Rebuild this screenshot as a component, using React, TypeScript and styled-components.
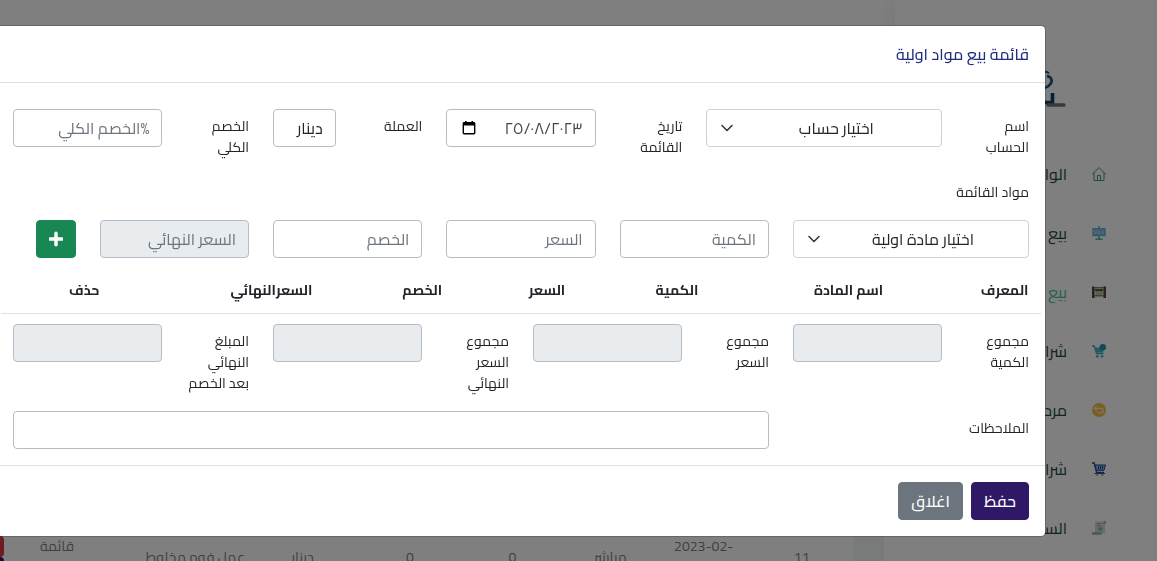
import React from 'react';
import styled, { createGlobalStyle, css } from 'styled-components';

const GlobalStyle = createGlobalStyle`
  *, *::before, *::after { box-sizing: border-box; }
  html, body { margin: 0; height: 100%; overflow: hidden; }
  body, button, input, select, textarea {
    font-family: Cairo, "DejaVu Sans", "Noto Sans", sans-serif;
    font-size: 16px;
    line-height: 24px;
    color: #212529;
  }
`;

/* ---------- page behind the dialog ---------- */

const Page = styled.div`
  display: flex;
  height: 100vh;
  overflow: hidden;
  background: #fff;
`;

const Sidebar = styled.aside`
  flex: none;
  width: 262px;
  padding-inline-start: 51px;
  background: #fff;
  box-shadow: 0 0 20px rgba(1, 41, 112, 0.1);
`;

const Brand = styled.div`
  height: 144px;
  padding-top: 68px;
  padding-inline-start: 40px;
`;

const NavLink = styled.a<{ $active?: boolean }>`
  display: flex;
  align-items: center;
  gap: 25px;
  height: 59px;
  text-decoration: none;
  white-space: nowrap;
  color: ${p => (p.$active ? '#4cc49c' : '#1f4a3c')};

  svg { flex: none; }
`;

const Main = styled.main`
  flex: 1;
  min-width: 0;
  display: flex;
  flex-direction: column;
`;

const TopBar = styled.div`
  flex: none;
  height: 60px;
`;

const Content = styled.div`
  flex: 1;
  display: flex;
  flex-direction: column;
  justify-content: flex-end;
  padding-inline-start: 42px;
  background: linear-gradient(to left, #fff 11px, #f3f6f7 11px, #f3f6f7 42px, #fff 42px);
`;

const Records = styled.table`
  flex: none;
  table-layout: fixed;
  border-collapse: collapse;
  margin-inline-end: -80px;
  margin-bottom: -17px;
  font-size: 14px;
  line-height: 21px;
  text-align: center;

  td { height: 42px; padding: 0 12px; color: #7c8287; }
  td:nth-child(7) { padding: 0; white-space: nowrap; }
  td:nth-last-child(2) { padding-inline-end: 36px; text-align: end; }
  td:last-child { padding: 0; }
`;

const RecordAction = styled.button<{ $color: string }>`
  display: block;
  width: 100%;
  height: 21px;
  border: 0;
  border-radius: 4px;
  background: ${p => p.$color};
`;

/* ---------- dialog ---------- */

const Backdrop = styled.div`
  position: fixed;
  inset: 0;
  display: flex;
  align-items: flex-start;
  padding-top: 25px;
  overflow: hidden;
  background: rgba(0, 0, 0, 0.5);
`;

const Dialog = styled.section`
  flex: 1;
  min-width: 0;
  margin-inline: 111px -4px;
  border: 1px solid rgba(0, 0, 0, 0.2);
  border-radius: 5px;
  background: #fff;
  background-clip: padding-box;
`;

const DialogHeader = styled.header`
  padding: 16px;
  border-bottom: 1px solid #dee2e6;
`;

const DialogTitle = styled.h1`
  margin: 0;
  font-size: 16px;
  font-weight: 500;
  line-height: 24px;
  color: #21307d;
`;

const DialogBody = styled.div`
  padding: 16px 4px;
`;

const FormRow = styled.div`
  display: grid;
  grid-template-columns: repeat(12, minmax(0, 1fr));
  align-items: start;
  margin-top: 10px;
`;

const Cell = styled.div<{ $span: number }>`
  grid-column: span ${p => p.$span};
  padding: 0 12px;
`;

const Label = styled.label`
  display: block;
  padding: 7px 0;
  font-size: 14px;
  line-height: 21px;
`;

const control = css`
  display: block;
  width: 100%;
  height: 38px;
  padding: 6px 12px;
  border: 1px solid #b6bdc9;
  border-radius: 4px;
  background: #fff;
`;

const Input = styled.input`
  ${control}
  &::placeholder { color: #6c757d; opacity: 1; }
  &:disabled { background: #e9ecef; }
`;

const SelectBox = styled.div`
  position: relative;

  svg {
    position: absolute;
    inset-inline-end: 13px;
    top: 11px;
    pointer-events: none;
  }
`;

const Select = styled.select`
  ${control}
  border-color: #ced4da;
  padding-inline-end: 36px;
  appearance: none;
  text-align: center;
  text-align-last: center;
`;

const DateBox = styled.div`
  ${control}
  display: flex;
  align-items: center;
`;

const DateInput = styled.input`
  flex: 1;
  min-width: 0;
  padding: 0;
  border: 0;
  background: none;
  color: #40464c;
`;

const PickerButton = styled.button`
  flex: none;
  display: flex;
  padding: 0;
  border: 0;
  background: none;
`;

const Button = styled.button<{ $color: string }>`
  height: 38px;
  padding: 6px 12px;
  border: 1px solid ${p => p.$color};
  border-radius: 4px;
  background: ${p => p.$color};
  color: #fff;
  font-weight: 500;

  svg { display: block; }
`;

const Items = styled.table`
  width: 100%;
  margin-top: 10px;
  table-layout: fixed;
  border-collapse: separate;
  border-spacing: 0;
  font-size: 14px;
  line-height: 21px;

  th {
    height: 46px;
    padding: 0;
    border-bottom: 1px solid #dee2e6;
    font-weight: 700;
    text-align: center;
    white-space: nowrap;
  }
`;

const DialogFooter = styled.footer`
  display: flex;
  gap: 8px;
  padding: 16px;
  border-top: 1px solid #dee2e6;
`;

/* ---------- drawings ---------- */

const Chevron = () => (
  <svg width="16" height="16" viewBox="0 0 16 16" fill="none" stroke="#343a40" strokeWidth="1.600" strokeLinecap="round" strokeLinejoin="round">
    <path d="m3 5.500 5 5 5-5" />
  </svg>
);

const Calendar = () => (
  <svg width="20" height="16" viewBox="0 0 20 16">
    <path fill="#000" d="M15 2h-1V1h-1.500v1H7.500V1H6v1H5a1.400 1.400 0 0 0-1.400 1.400v9.700A1.400 1.400 0 0 0 5 14.500h10a1.400 1.400 0 0 0 1.400-1.400V3.400A1.400 1.400 0 0 0 15 2zm0 11.100H5V5.500h10z" />
  </svg>
);

const Plus = () => (
  <svg width="14" height="16" viewBox="0 0 14 16" stroke="#fff" strokeWidth="3.500" strokeLinecap="round">
    <path d="M7 2.200v11.600M1.200 8h11.600" />
  </svg>
);

const Logo = () => (
  <svg width="80" height="42" viewBox="0 0 80 42" fill="none">
    <path d="M56 6c2-3 5-3 7-.500" stroke="#245a80" strokeWidth="2" />
    <path d="M52 16c3-1 4-3 4-6M61 8c5 1 6 5 3 8.500-2 2.500-6 4-10 4" stroke="#1d4f75" strokeWidth="2.600" />
    <path d="M30 34.500h36.500V25" stroke="#123f66" strokeWidth="3.600" />
    <path d="M62 37h16" stroke="#6d747b" strokeWidth="3.500" strokeLinecap="round" />
  </svg>
);

const icon = { width: 14, height: 14, viewBox: '0 0 14 14', fill: 'none' };

const HomeIcon = () => (
  <svg {...icon} stroke="#3f9c7c" strokeLinejoin="round" strokeLinecap="round">
    <path d="M.5 7 7 .600 13.500 7M2 5.800v7.700h10V5.800M5.500 13.500v-5h3v5" />
  </svg>
);

const SaleIcon = () => (
  <svg {...icon}>
    <path d="M7 0v2M7 10v3M3.500 13.300h7" stroke="#3cbfa0" strokeWidth="1.600" />
    <path d="M.3 2h13.400v8.300H.3z" fill="#6fb2dc" />
    <path d="M3.600 4.600H1.900v1.500h1.700v1.700H1.900M4.900 8V4.600h1.400V8M7.700 4.500v3.300H9M11.900 4.600h-1.700v3.200h1.700M10.200 6.200h1.500" stroke="#c3dcee" strokeWidth=".8" />
  </svg>
);

const LoomIcon = () => (
  <svg {...icon}>
    <path d="M1.300 1.500v11.500M12.700 1.500v11.500" stroke="#5c4034" strokeWidth="2.600" />
    <path d="M2 2.800h10M2 10.800h10" stroke="#8c7a72" strokeWidth="1.400" />
    <path d="M3.500 4.500h7v5.300h-7z" fill="#8fbf78" />
    <path d="M3 5h8" stroke="#3c342e" strokeWidth="1.500" />
    <path d="M5 7.500h4" stroke="#e2dcae" />
  </svg>
);

const CartPlusIcon = () => (
  <svg {...icon}>
    <path d="M0 2h2.300l2.200 7.500h7" stroke="#35a5ba" strokeWidth="1.300" />
    <path d="M2.800 3.500h9.700l-1.600 5H4.300z" fill="#4fb4c6" />
    <circle cx="10.800" cy="3.200" r="3.200" fill="#2593b0" />
    <circle cx="5.300" cy="12.300" r="1.400" fill="#49b3c4" />
    <circle cx="10" cy="12.300" r="1.400" fill="#49b3c4" />
  </svg>
);

const ReturnIcon = () => (
  <svg {...icon}>
    <circle cx="7" cy="7" r="7" fill="#f2bd45" />
    <path d="M4.800 3.300 2.500 5.400l2.300 2.100M2.700 5.400h6.500a2.200 2.200 0 0 1 0 4.400H5.500" stroke="#fff0cc" strokeWidth="1.200" />
  </svg>
);

const CartIcon = () => (
  <svg {...icon}>
    <path d="M0 1h2.200l2.300 9.300h7.500" stroke="#1f4c96" strokeWidth="1.300" />
    <path d="M3 3h10.500L12 8.300H4.300z" fill="#8fb4e0" stroke="#1f4c96" />
    <path d="M6.500 4.200v3M8.500 4.200v3M10.500 4.200v3" stroke="#1f3f7c" />
    <path d="M2.500 11.500H13" stroke="#1f4c96" />
    <circle cx="5" cy="12.800" r="1.200" fill="#b5a468" />
    <circle cx="10.300" cy="12.800" r="1.200" fill="#b5a468" />
  </svg>
);

const ReceiptIcon = () => (
  <svg {...icon}>
    <path d="M3 .5h10v12H3z" fill="#d3d7da" />
    <path d="M11.500.3H14v2.500h-2.500zM0 11.200h9.500v2.500H0z" fill="#a2a7ac" />
    <path d="M5 2.500h4M5 4.500h3" stroke="#a2a7ac" />
    <circle cx="8.300" cy="7.800" r="2.700" fill="#a9d4be" />
    <path d="m7 7.800 1 1 1.800-2" stroke="#3d9c70" />
  </svg>
);

/* ---------- data ---------- */

const nav = [
  { text: 'الواجهة', Icon: HomeIcon },
  { text: 'بيع', Icon: SaleIcon },
  { text: 'بيع', Icon: LoomIcon, active: true },
  { text: 'شراء', Icon: CartPlusIcon },
  { text: 'مردود', Icon: ReturnIcon },
  { text: 'شراء', Icon: CartIcon },
  { text: 'السندات', Icon: ReceiptIcon },
];

const recordWidths = [11, 10, 10, 11, 11, 12, 11, 15, 9];

const itemColumns = [
  { text: 'المعرف', width: 7 },
  { text: 'اسم المادة', width: 23 },
  { text: 'الكمية', width: 10 },
  { text: 'السعر', width: 15 },
  { text: 'الخصم', width: 9 },
  { text: 'السعرالنهائي', width: 20 },
  { text: 'حذف', width: 16 },
];

const totals = [
  { id: 'total-quantity', text: 'مجموع الكمية' },
  { id: 'total-price', text: 'مجموع السعر' },
  { id: 'total-final', text: 'مجموع السعر النهائي' },
  { id: 'total-net', text: 'المبلغ النهائي بعد الخصم' },
];

export default function App() {
  return (
    <>
      <GlobalStyle />
      <Page dir="rtl" lang="ar">
        <Sidebar>
          <Brand><Logo /></Brand>
          <nav>
            {nav.map(({ text, Icon, active }, i) => (
              <NavLink key={i} href="#" $active={active}><Icon />{text}</NavLink>
            ))}
          </nav>
        </Sidebar>
        <Main>
          <TopBar />
          <Content>
            <Records>
              <colgroup>
                {recordWidths.map((w, i) => <col key={i} style={{ width: `${w}%` }} />)}
              </colgroup>
              <tbody>
                <tr>
                  <td>11</td>
                  <td dir="ltr">2023-02-12</td>
                  <td>مباشر</td>
                  <td>0</td>
                  <td>0</td>
                  <td>دينار</td>
                  <td>عمل فوم مخلوط</td>
                  <td>قائمة<br />بيع</td>
                  <td>
                    <RecordAction $color="#dc3545" aria-label="حذف" />
                    <RecordAction $color="#2f1967" aria-label="تعديل" />
                  </td>
                </tr>
              </tbody>
            </Records>
          </Content>
        </Main>

        <Backdrop>
          <Dialog role="dialog" aria-modal="true" aria-labelledby="dialog-title">
            <DialogHeader>
              <DialogTitle id="dialog-title">قائمة بيع مواد اولية</DialogTitle>
            </DialogHeader>
            <DialogBody>
              <FormRow>
                <Cell $span={1}><Label htmlFor="account">اسم الحساب</Label></Cell>
                <Cell $span={3}>
                  <SelectBox>
                    <Select id="account"><option>اختيار حساب</option></Select>
                    <Chevron />
                  </SelectBox>
                </Cell>
                <Cell $span={1}><Label htmlFor="date">تاريخ القائمة</Label></Cell>
                <Cell $span={2}>
                  <DateBox>
                    <DateInput id="date" defaultValue="٢٥/٠٨/٢٠٢٣" />
                    <PickerButton type="button" aria-label="اختيار التاريخ"><Calendar /></PickerButton>
                  </DateBox>
                </Cell>
                <Cell $span={1}><Label htmlFor="currency">العملة</Label></Cell>
                <Cell $span={1}><Input id="currency" defaultValue="دينار" /></Cell>
                <Cell $span={1}><Label htmlFor="discount-total">الخصم الكلي</Label></Cell>
                <Cell $span={2}><Input id="discount-total" placeholder="%الخصم الكلي" /></Cell>
              </FormRow>

              <FormRow>
                <Cell $span={3}><Label htmlFor="material">مواد القائمة</Label></Cell>
              </FormRow>

              <FormRow>
                <Cell $span={3}>
                  <SelectBox>
                    <Select id="material"><option>اختيار مادة اولية</option></Select>
                    <Chevron />
                  </SelectBox>
                </Cell>
                <Cell $span={2}><Input aria-label="الكمية" placeholder="الكمية" /></Cell>
                <Cell $span={2}><Input aria-label="السعر" placeholder="السعر" /></Cell>
                <Cell $span={2}><Input aria-label="الخصم" placeholder="الخصم" /></Cell>
                <Cell $span={2}><Input aria-label="السعر النهائي" placeholder="السعر النهائي" disabled /></Cell>
                <Cell $span={1}><Button type="button" $color="#198754" aria-label="اضافة"><Plus /></Button></Cell>
              </FormRow>

              <Items>
                <colgroup>
                  {itemColumns.map(c => <col key={c.text} style={{ width: `${c.width}%` }} />)}
                </colgroup>
                <thead>
                  <tr>{itemColumns.map(c => <th key={c.text} scope="col">{c.text}</th>)}</tr>
                </thead>
              </Items>

              <FormRow>
                {totals.map(t => (
                  <React.Fragment key={t.id}>
                    <Cell $span={1}><Label htmlFor={t.id}>{t.text}</Label></Cell>
                    <Cell $span={2}><Input id={t.id} disabled /></Cell>
                  </React.Fragment>
                ))}
              </FormRow>

              <FormRow>
                <Cell $span={3}><Label htmlFor="notes">الملاحظات</Label></Cell>
                <Cell $span={9}><Input id="notes" /></Cell>
              </FormRow>
            </DialogBody>
            <DialogFooter>
              <Button type="button" $color="#2f1967">حفظ</Button>
              <Button type="button" $color="#6c757d">اغلاق</Button>
            </DialogFooter>
          </Dialog>
        </Backdrop>
      </Page>
    </>
  );
}
